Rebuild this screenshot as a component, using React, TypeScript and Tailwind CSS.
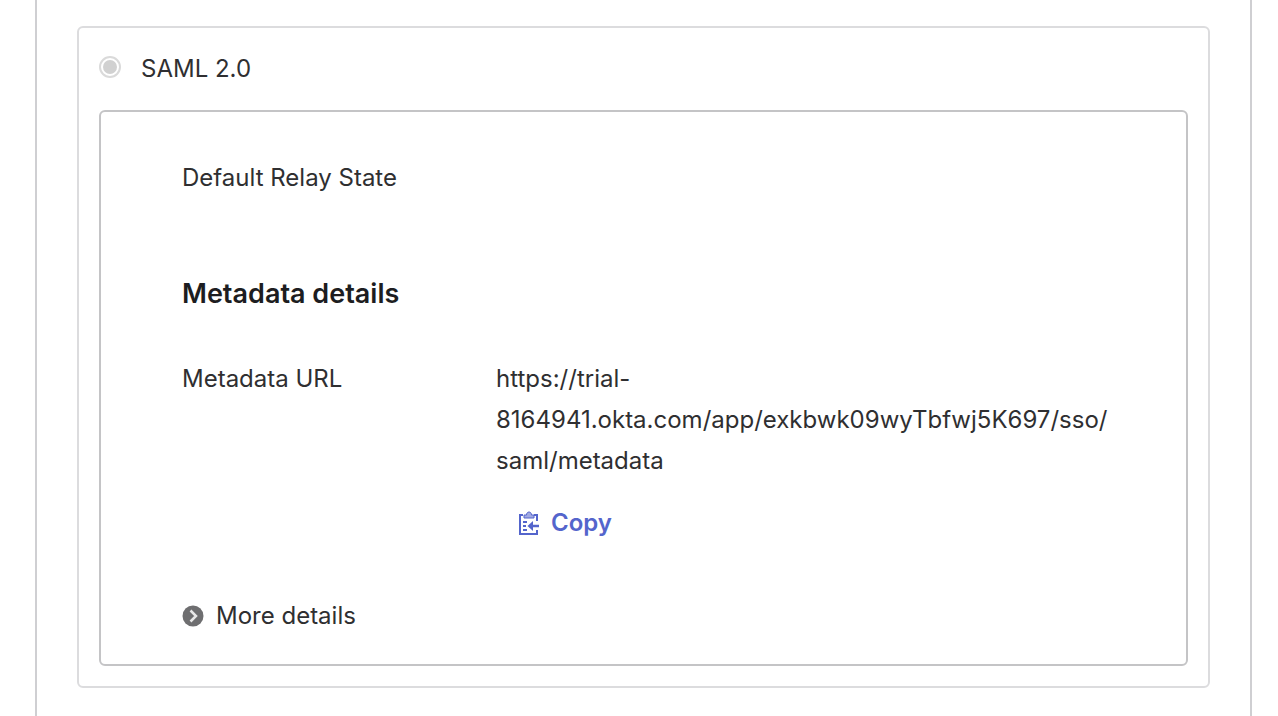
export default function App() {
  return (
    <main className="h-screen overflow-hidden bg-white pr-[26px] pl-[35px] font-['Inter',sans-serif] text-2xl text-[#2f2f31]">
      <div className="h-full border-x-2 border-[#cfcfd2] px-10 pt-[26px]">
        <section className="rounded-md border-2 border-[#dcdcde] p-5">
          <label className="flex h-[62px] items-start gap-5 leading-[42px]">
            <input
              type="radio"
              name="method"
              defaultChecked
              disabled
              className="mt-2 size-[22px] appearance-none rounded-full border-2 border-[#dadada] bg-[#d1d1d1] bg-clip-content p-[2px]"
            />
            SAML 2.0
          </label>
          <div className="rounded-md border-2 border-[#c4c4c6] pt-[46px] pr-[80px] pb-[28px] pl-[81px] leading-10">
            <p>Default Relay State</p>
            <h2 className="mt-[76px] text-[27px] font-semibold text-[#1d1d21]">Metadata details</h2>
            <dl className="mt-11 flex leading-[41px]">
              <dt className="w-[314px] shrink-0">Metadata URL</dt>
              <dd className="min-w-0 flex-1">
                <p>
                  https://trial-
                  <br />
                  8164941.okta.com/app/exkbwk09wyTbfwj5K697/sso/
                  <br />
                  saml/metadata
                </p>
                <button type="button" className="mt-[21px] ml-[23px] flex items-center gap-3 font-semibold text-[#5465cc]">
                  <svg viewBox="0 0 20 24" className="h-6 w-5" fill="none" stroke="currentColor" strokeWidth="2" aria-hidden="true">
                    <path d="M4 4H1V23H18V19M15 4H18V10" />
                    <path d="M5 7V4H7.5C7.5 0 12.5 0 12.5 4H15V7Z" fill="currentColor" fillOpacity="0.55" strokeWidth="1" />
                    <path d="M4 11H8M4 15H7M4 19H8" />
                    <path d="M20 15H11" strokeWidth="2.5" />
                    <path d="M14 10L8.5 15L14 20Z" fill="currentColor" stroke="none" />
                  </svg>
                  Copy
                </button>
              </dd>
            </dl>
            <button type="button" className="mt-[53px] flex items-center gap-3">
              <svg viewBox="0 0 22 22" className="size-[22px]" fill="none" aria-hidden="true">
                <circle cx="11" cy="11" r="10.5" fill="#6e6e70" />
                <path d="M8.5 5.5L14 11L8.5 16.5" stroke="#e8e8e8" strokeWidth="2.5" />
              </svg>
              More details
            </button>
          </div>
        </section>
      </div>
    </main>
  );
}
